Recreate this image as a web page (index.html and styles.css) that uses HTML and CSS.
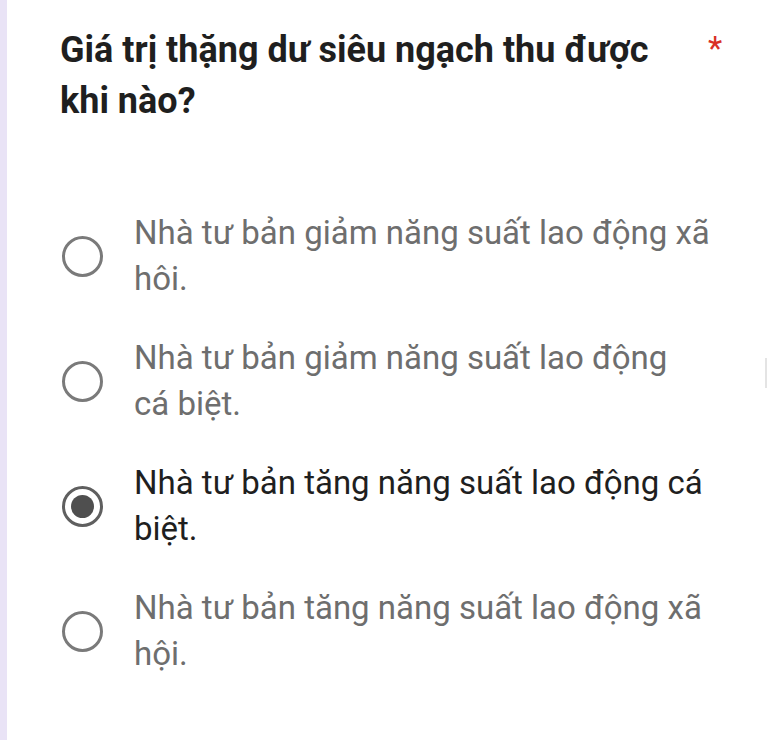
FILE: index.html
```html
<!DOCTYPE html>
<html lang="vi">
<head>
    <meta charset="UTF-8">
    <meta name="viewport" content="width=device-width, initial-scale=1.0">
    <title>Câu hỏi</title>
    <link rel="stylesheet" href="styles.css">
</head>
<body>
    <div class="page">
        <div class="card">
            <!-- Question title -->
            <div class="question">
                <div class="title">Giá trị thặng dư siêu ngạch thu được khi nào?</div>
                <span class="required">*</span>
            </div>

            <!-- Choices -->
            <div class="options">
                <label class="option">
                    <span class="radio"></span>
                    <span class="label">Nhà tư bản giảm năng suất lao động xã hôi.</span>
                </label>
                <label class="option">
                    <span class="radio"></span>
                    <span class="label">Nhà tư bản giảm năng suất lao động cá biệt.</span>
                </label>
                <label class="option checked">
                    <span class="radio"></span>
                    <span class="label">Nhà tư bản tăng năng suất lao động cá biệt.</span>
                </label>
                <label class="option">
                    <span class="radio"></span>
                    <span class="label">Nhà tư bản tăng năng suất lao động xã hội.</span>
                </label>
            </div>
        </div>
        <div class="edge"></div>
    </div>
</body>
</html>
```

FILE: styles.css
```css
/* General */
body {
    margin: 0;
    background: #ffffff;
    font-family: Roboto, "Noto Sans", Arial, sans-serif;
}

.page {
    display: flex;
    min-height: 740px;
    border-left: 7px solid #e9e3f6;
    box-sizing: border-box;
}

/* Card */
.card {
    flex: 1;
    padding: 25px 0 0 53px;
}

/* Question */
.question {
    display: flex;
    align-items: flex-start;
}

.title {
    width: 620px;
    font-size: 36px;
    font-weight: bold;
    line-height: 51px;
    color: #1f1f1f;
}

.required {
    margin-left: 28px;
    margin-top: 4px;
    font-size: 33px;
    line-height: 40px;
    color: #d93025;
}

/* Options */
.options {
    display: flex;
    flex-direction: column;
    gap: 33px;
    margin-top: 83px;
}

.option {
    display: flex;
    align-items: center;
    cursor: pointer;
}

.radio {
    flex: none;
    width: 35px;
    height: 35px;
    border: 3px solid #7a7a7a;
    border-radius: 50%;
    margin-left: 2px;
    margin-right: 31px;
    display: flex;
    align-items: center;
    justify-content: center;
}

.label {
    width: 576px;
    font-size: 33px;
    line-height: 46px;
    color: #6e6e6e;
}

.option.checked .label {
    color: #1f1f1f;
}

.option.checked .radio {
    border-color: #5f5f5f;
}

.option.checked .radio::after {
    content: "";
    width: 23px;
    height: 23px;
    border-radius: 50%;
    background: #4f4f4f;
}

/* Right edge mark */
.edge {
    width: 2px;
    height: 30px;
    margin-top: 358px;
    margin-right: 1px;
    background: #e4e4e4;
}
```
